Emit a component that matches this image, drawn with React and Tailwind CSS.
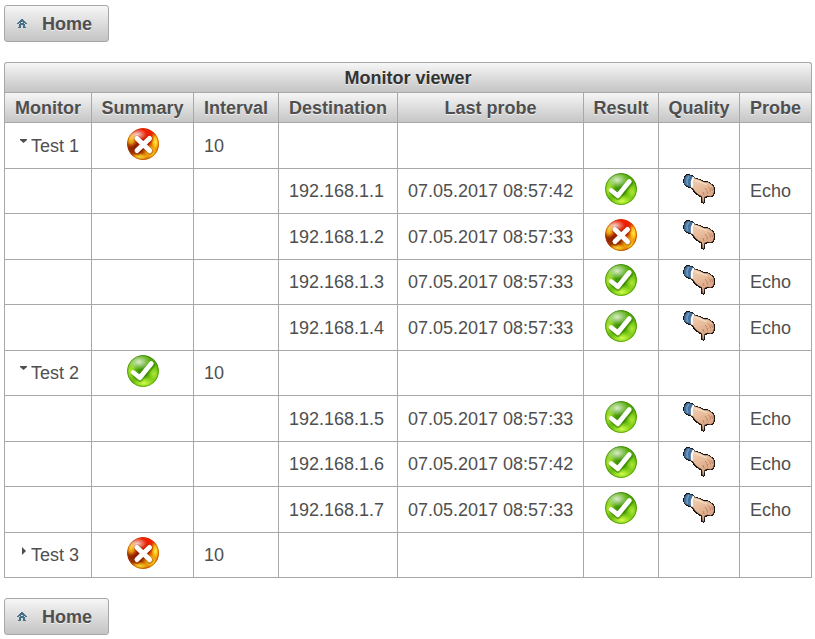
import React from "react";

const PIXEL_HOUSE = [
  "....##....",
  "...####...",
  "..######..",
  ".###..###.",
  "##.####.##",
  "..######..",
  "..##..##..",
  "..##..##..",
  ".###..###.",
];

function HouseIcon() {
  return (
    <svg width="10" height="9" viewBox="0 0 10 9" shapeRendering="crispEdges" aria-hidden="true" fill="#457088">
      {PIXEL_HOUSE.flatMap((row, y) =>
        [...row].map((c, x) => (c === "#" ? <rect key={`${x}-${y}`} x={x} y={y} width="1" height="1" /> : null))
      )}
    </svg>
  );
}

function Defs() {
  return (
    <svg width="0" height="0" className="absolute" aria-hidden="true">
      <defs>
        <radialGradient id="green" cx="0.5" cy="0.5" r="0.52">
          <stop offset="0" stopColor="#3a8c00" />
          <stop offset="0.6" stopColor="#4aa800" />
          <stop offset="0.85" stopColor="#54ac08" />
          <stop offset="1" stopColor="#357f00" />
        </radialGradient>
        <radialGradient id="greenGlow" cx="0.5" cy="0.5" r="0.5">
          <stop offset="0" stopColor="#d4fb50" />
          <stop offset="0.4" stopColor="#a8e82c" stopOpacity="0.85" />
          <stop offset="1" stopColor="#8fd420" stopOpacity="0" />
        </radialGradient>
        <radialGradient id="gloss" cx="0.5" cy="0.5" r="0.5">
          <stop offset="0" stopColor="#fff" stopOpacity="0.8" />
          <stop offset="0.5" stopColor="#fff" stopOpacity="0.4" />
          <stop offset="1" stopColor="#fff" stopOpacity="0" />
        </radialGradient>
        <linearGradient id="red" x1="0.7" y1="0" x2="0.4" y2="1">
          <stop offset="0" stopColor="#ff1c00" />
          <stop offset="0.35" stopColor="#d42000" />
          <stop offset="0.65" stopColor="#8a1c00" />
          <stop offset="1" stopColor="#a84400" />
        </linearGradient>
        <radialGradient id="amber" cx="0.5" cy="0.5" r="0.5">
          <stop offset="0" stopColor="#fff04a" />
          <stop offset="0.45" stopColor="#fbbd10" stopOpacity="0.9" />
          <stop offset="1" stopColor="#e66a00" stopOpacity="0" />
        </radialGradient>
        <linearGradient id="skin" x1="0" y1="0" x2="0.4" y2="1">
          <stop offset="0" stopColor="#f3d3b4" />
          <stop offset="0.5" stopColor="#e8bc9b" />
          <stop offset="1" stopColor="#d79f80" />
        </linearGradient>
        <clipPath id="ball">
          <circle cx="16" cy="16" r="16" />
        </clipPath>
      </defs>
    </svg>
  );
}

function OkIcon() {
  return (
    <svg width="32" height="32" viewBox="0 0 32 32" role="img" aria-label="OK" className="mx-auto block">
      <g clipPath="url(#ball)">
        <circle cx="16" cy="16" r="16" fill="url(#green)" />
        <ellipse cx="27" cy="19" rx="8" ry="11" fill="url(#greenGlow)" opacity="0.75" />
        <ellipse cx="17" cy="28" rx="15" ry="8" fill="url(#greenGlow)" />
        <ellipse cx="4" cy="16" rx="7" ry="12" fill="url(#greenGlow)" opacity="0.8" />
        <ellipse cx="12" cy="7" rx="12" ry="8" fill="url(#gloss)" />
        <circle cx="16" cy="16" r="15.5" fill="none" stroke="#3f8c08" strokeOpacity="0.5" />
      </g>
      <path d="M7 18.5 13 24 25 10" fill="none" stroke="#286b00" strokeOpacity="0.45" strokeWidth="6" strokeLinecap="round" strokeLinejoin="round" />
      <path d="M6.3 17.5 12.8 22.7 24.3 8.5" fill="none" stroke="#fff" strokeWidth="4.8" strokeLinecap="round" strokeLinejoin="round" />
    </svg>
  );
}

function FailIcon() {
  return (
    <svg width="32" height="32" viewBox="0 0 32 32" role="img" aria-label="Failed" className="mx-auto block">
      <g clipPath="url(#ball)">
        <circle cx="16" cy="16" r="16" fill="url(#red)" />
        <ellipse cx="24" cy="24" rx="10" ry="10" fill="url(#amber)" />
        <ellipse cx="28.5" cy="14" rx="6" ry="12" fill="url(#amber)" />
        <ellipse cx="13" cy="29" rx="12" ry="5" fill="url(#amber)" opacity="0.85" />
        <ellipse cx="4" cy="11" rx="7" ry="9" fill="url(#amber)" opacity="0.85" />
        <ellipse cx="10" cy="6.5" rx="10" ry="6" fill="url(#gloss)" />
        <circle cx="16" cy="16" r="15.5" fill="none" stroke="#b84200" strokeOpacity="0.5" />
      </g>
      <path d="M10.5 11 23 23.5M23 11 10.5 23.5" fill="none" stroke="#8a1d00" strokeOpacity="0.4" strokeWidth="6.6" strokeLinecap="round" />
      <path d="M10 10.5 22.5 22.5M22.5 10.5 10 22.5" fill="none" stroke="#fff" strokeWidth="5" strokeLinecap="round" />
    </svg>
  );
}

function ThumbDownIcon() {
  return (
    <svg width="32" height="32" viewBox="0 0 32 32" role="img" aria-label="Poor quality" className="mx-auto block">
      <path
        d="M0 8 1 4 3.5 1 6 1 11 3 12 5 17 6 21 8.3 25 8.3 29 11 31 13 32 15 32 19 31 22.5 28 24.5 25 24 22.5 25 22 30 20 31 18.5 29.5 18 24.5 14 22 11 19.5 9 16 4 14 1 11.5Z"
        fill="#19110e"
        shapeRendering="crispEdges"
      />
      <path
        d="M10 5 12 5.5 17 7 21 9.2 25 9.3 28.7 11.8 30.6 14 31 18.6 30 22 27.5 23.4 24.5 22.8 21.4 24 20.8 29.5 19.6 29.3 19 23.6 15.5 21.4 12.5 19 10 15.5 8 14.2Z"
        fill="url(#skin)"
      />
      <path d="M1 7.5 2 4.2 3.8 2 6 2 10.5 3.6 7.6 14.2 3 12.6 1.3 11Z" fill="#4773a0" />
      <path d="M6 3 4 6.5 4.5 12" fill="none" stroke="#6f99bd" strokeWidth="1.6" />
      <path d="M10.6 4 8.8 8.5 8.9 14.6" fill="none" stroke="#fff" strokeWidth="2" />
      <path d="M25 13.5 27 15.5 27.5 18.5M22 15 24 17.5 24.5 20.5M28.6 14.5 29.6 18M20 19 21 22" fill="none" stroke="#b97f5e" strokeWidth="0.9" />
      <path d="M12 7.5 18 9.5 24 11.5" fill="none" stroke="#fff0dc" strokeOpacity="0.5" strokeWidth="1.5" />
    </svg>
  );
}

function HomeButton() {
  return (
    <button
      type="button"
      className="flex h-[37px] items-center rounded-[3px] border border-[#a8a8a8] bg-linear-to-b from-[#f6f6f6] to-[#c4c4c4] pr-4 pl-3 font-bold text-[#4f4f4f] [text-shadow:0_1px_0_rgba(255,255,255,0.7)]"
    >
      <HouseIcon />
      <span className="pl-[15px]">Home</span>
    </button>
  );
}

const COLUMNS = [
  ["Monitor", "w-[87px]"],
  ["Summary", "w-[102px]"],
  ["Interval", "w-[85px]"],
  ["Destination", "w-[119px]"],
  ["Last probe", "w-[186px]"],
  ["Result", "w-[75px]"],
  ["Quality", "w-[81px]"],
  ["Probe", "w-[72px]"],
];

const ROWS = [
  { name: "Test 1", open: true, ok: false, interval: "10" },
  { destination: "192.168.1.1", last: "07.05.2017 08:57:42", result: true, probe: "Echo" },
  { destination: "192.168.1.2", last: "07.05.2017 08:57:33", result: false, probe: "" },
  { destination: "192.168.1.3", last: "07.05.2017 08:57:33", result: true, probe: "Echo" },
  { destination: "192.168.1.4", last: "07.05.2017 08:57:33", result: true, probe: "Echo" },
  { name: "Test 2", open: true, ok: true, interval: "10" },
  { destination: "192.168.1.5", last: "07.05.2017 08:57:33", result: true, probe: "Echo" },
  { destination: "192.168.1.6", last: "07.05.2017 08:57:42", result: true, probe: "Echo" },
  { destination: "192.168.1.7", last: "07.05.2017 08:57:33", result: true, probe: "Echo" },
  { name: "Test 3", open: false, ok: false, interval: "10" },
];

function Toggle({ open, name }) {
  return (
    <button type="button" aria-expanded={open} aria-label={`Toggle ${name}`} className="flex h-3 w-4 items-center justify-center">
      <svg width="8" height="8" viewBox="0 0 8 8" fill="#4f4f4f" aria-hidden="true">
        {open ? <path d="M1 1H8V2L4.5 5L1 2Z" /> : <path d="M3 0V8L7 4Z" />}
      </svg>
    </button>
  );
}

function Cell({ children, className = "px-[10px]" }) {
  return <td className={`border border-[#a8a8a8] p-0 align-middle ${className}`}>{children}</td>;
}

function Row({ row }) {
  const parent = Boolean(row.name);
  return (
    <tr className="odd:h-[46px] even:h-[45px]">
      <Cell className="pl-[10px]">
        {parent && (
          <div className="flex items-start">
            <Toggle open={row.open} name={row.name} />
            <span>{row.name}</span>
          </div>
        )}
      </Cell>
      <Cell className="pb-1">{parent && (row.ok ? <OkIcon /> : <FailIcon />)}</Cell>
      <Cell>{row.interval}</Cell>
      <Cell>{row.destination}</Cell>
      <Cell>{row.last}</Cell>
      <Cell className="pb-1">{!parent && (row.result ? <OkIcon /> : <FailIcon />)}</Cell>
      <Cell className="pb-1">{!parent && <ThumbDownIcon />}</Cell>
      <Cell>{row.probe}</Cell>
    </tr>
  );
}

export default function App() {
  return (
    <main className="flex flex-col items-start gap-5 bg-white pt-[5px] pr-[3px] pb-1 pl-1 font-['Liberation_Sans',Arial,sans-serif] text-[18px] leading-5 text-[#4f4f4f]">
      <Defs />
      <HomeButton />
      <table className="w-full table-fixed border-collapse whitespace-nowrap">
        <caption className="h-[30px] rounded-t-[3px] border border-b-0 border-[#a8a8a8] bg-linear-to-b from-[#f6f6f6] to-[#c4c4c4] pt-[5px] font-bold text-[#333333] [text-shadow:0_1px_0_rgba(255,255,255,0.7)]">
          Monitor viewer
        </caption>
        <colgroup>
          {COLUMNS.map(([label, width]) => (
            <col key={label} className={width} />
          ))}
        </colgroup>
        <thead>
          <tr className="h-[30px] bg-linear-to-b from-[#f6f6f6] to-[#c4c4c4]">
            {COLUMNS.map(([label]) => (
              <th key={label} scope="col" className="border border-[#a8a8a8] p-0 text-center font-bold [text-shadow:0_1px_0_rgba(255,255,255,0.7)]">
                {label}
              </th>
            ))}
          </tr>
        </thead>
        <tbody>
          {ROWS.map((row) => (
            <Row key={row.name || row.destination} row={row} />
          ))}
        </tbody>
      </table>
      <HomeButton />
    </main>
  );
}
